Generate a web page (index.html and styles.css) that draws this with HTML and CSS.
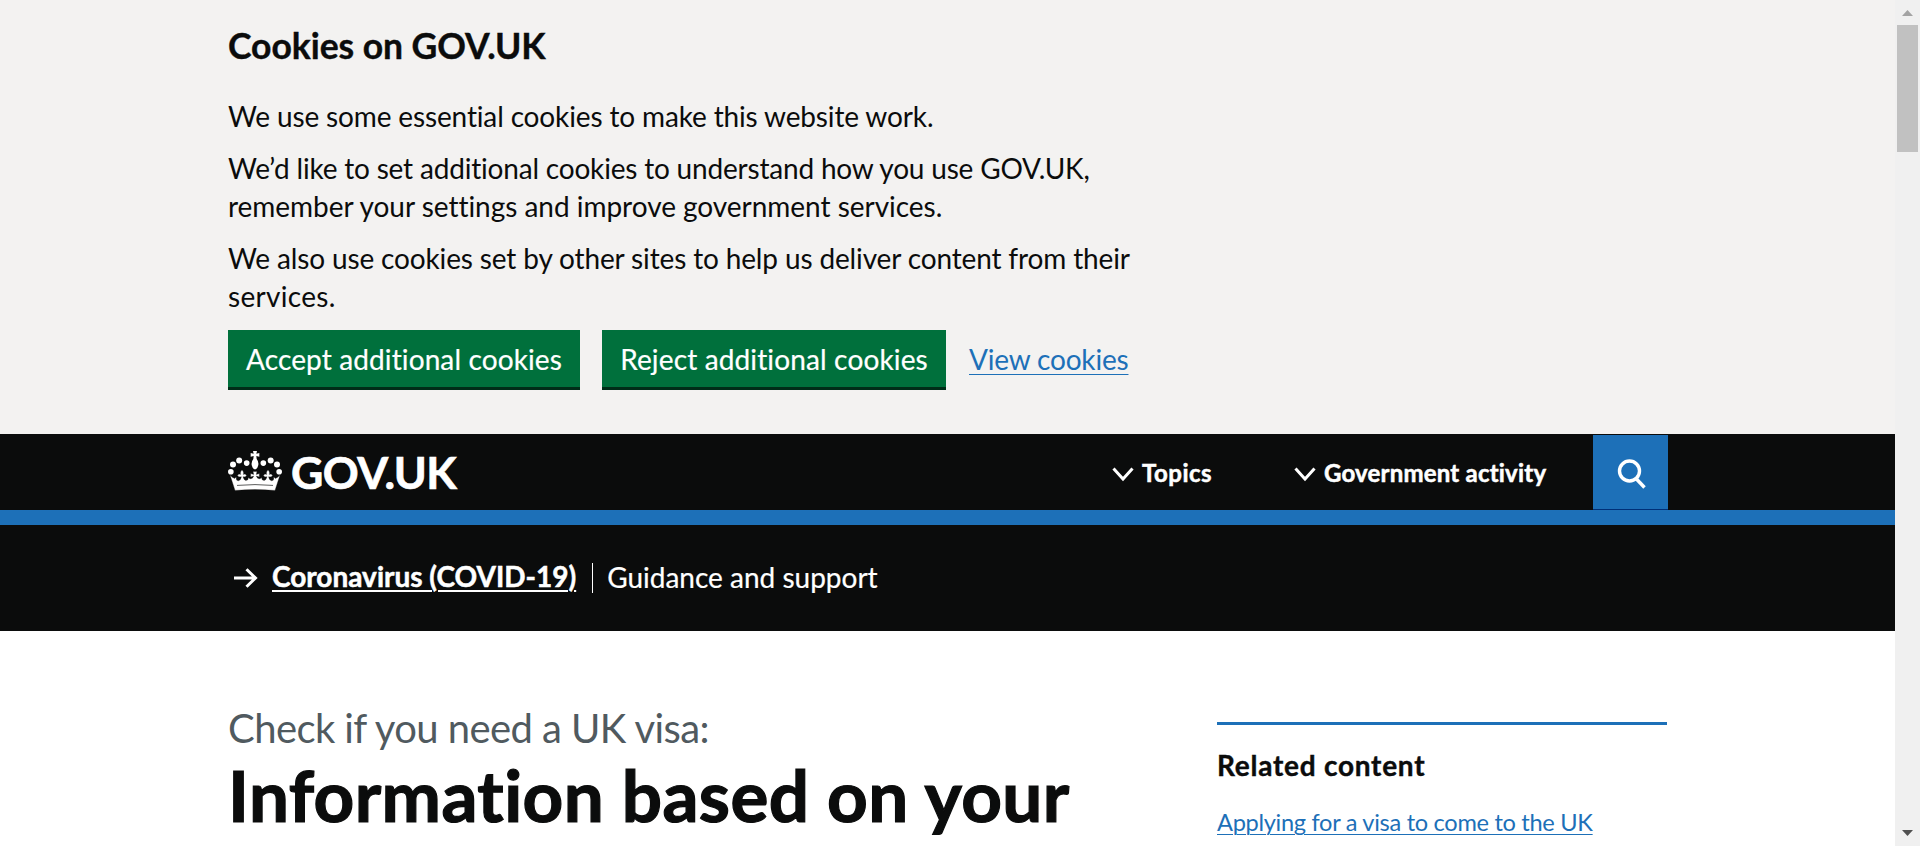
FILE: index.html
```
<!DOCTYPE html>
<html lang="en">
<head>
<meta charset="utf-8">
<title>Check if you need a UK visa - GOV.UK</title>
<link rel="stylesheet" href="styles.css">
</head>
<body>
<div class="page">
  <section class="cookie-banner">
    <h2 class="cookie-title">Cookies on GOV.UK</h2>
    <p class="cookie-text">We use some essential cookies to make this website work.</p>
    <p class="cookie-text"><span class="tight">We’d like to set additional cookies to understand how you use GOV.UK,</span><br><span class="loose">remember your settings and improve government services.</span></p>
    <p class="cookie-text">We also use cookies set by other sites to help us deliver content from their<br><span class="last">services.</span></p>
    <div class="cookie-actions">
      <button class="button accept">Accept additional cookies</button>
      <button class="button reject">Reject additional cookies</button>
      <a class="link view" href="#">View cookies</a>
    </div>
  </section>

  <header class="header">
    <div class="header-inner">
      <a class="logo" href="#">
        <svg class="crown" viewBox="39 65 162 118" aria-hidden="true">
          <circle cx="47.500" cy="127" r="8.500"/><circle cx="54" cy="105" r="9"/><circle cx="72.500" cy="93.500" r="9"/><circle cx="95" cy="101" r="8.500"/>
          <circle cx="145" cy="101" r="8.500"/><circle cx="167" cy="93.500" r="9"/><circle cx="186" cy="105" r="9"/><circle cx="192.500" cy="127" r="8.500"/>
          <path d="M114 65h12l-2 8 9-2v11l-9-2 1 9q8 10 4 21-3 10-9 10t-9-10q-4-11 4-21l1-9-9 2V71l9 2z"/>
          <path class="band" d="M45 137q6 8 14 10l5-5q-2 12 6 12 8-2 9-12-7 2-12-4 5-6 10-3-3-7 4-14 7 7 4 14 5-3 10 3-5 6-11 4 3 11 9 11 8 0 7-9l5 4q8 2 11-8l-9 3v-11l9 3-2-9h12l-2 9 9-3v11l-9-3q3 10 11 8l5-4q-1 9 7 9 6 0 9-11-6 2-11-4 5-6 10-3-3-7 4-14 7 7 4 14 5-3 10 3-5 6-12 4 1 10 9 12 8 0 6-12l5 5q8-2 14-10l-15 46q-60-5-120 0z"/>
          <path class="hem" d="M66 168q54-5 108 0"/>
        </svg>
        <span class="logo-text">GOV.UK</span>
      </a>
      <nav class="nav">
        <a class="nav-item topics" href="#"><svg class="chevron" viewBox="0 0 22 15"><path d="M1.500 1.500 11 12 20.500 1.500"/></svg><span>Topics</span></a>
        <a class="nav-item activity" href="#"><svg class="chevron" viewBox="0 0 22 15"><path d="M1.500 1.500 11 12 20.500 1.500"/></svg><span>Government activity</span></a>
        <button class="search" aria-label="Search"><svg class="search-icon" viewBox="0 0 30 30"><circle cx="12.500" cy="12" r="10"/><path d="M19 19.500 27.500 28.500"/></svg></button>
      </nav>
    </div>
  </header>

  <div class="covid">
    <svg class="arrow" viewBox="0 0 24 20"><path d="M0 10H21M12.500 1.200 21.500 10 12.500 18.800"/></svg>
    <a class="covid-link" href="#">Coronavirus (COVID-19)</a>
    <span class="covid-text">Guidance and support</span>
  </div>

  <main class="main">
    <h1 class="heading"><span class="caption">Check if you need a UK visa:</span><span class="title">Information based on your</span></h1>
    <aside class="related">
      <h2 class="related-title">Related content</h2>
      <a class="link related-link" href="#">Applying for a visa to come to the UK</a>
    </aside>
  </main>
</div>
<div class="scrollbar">
  <svg class="scroll-arrow" viewBox="0 0 11 6"><path fill="#a3a3a3" d="M0 6 5.500 0 11 6z"/></svg>
  <div class="thumb"></div>
  <svg class="scroll-arrow down" viewBox="0 0 11 6"><path fill="#505050" d="M0 0H11L5.500 6z"/></svg>
</div>
</body>
</html>
```
FILE: styles.css
```
* { box-sizing: border-box; }
html { height: 100%; overflow: hidden; }
body {
  margin: 0;
  height: 846px;
  overflow: hidden;
  display: grid;
  grid-template-columns: 1895px 25px;
  font-family: Lato, "Open Sans", sans-serif;
  font-size: 28px;
  font-variant-ligatures: none;
  color: #0b0c0c;
  background: #fff;
}
h1, h2, p { margin: 0; }
button { border: 0; font: inherit; color: #fff; padding: 0; }
.page { height: 846px; overflow: hidden; white-space: nowrap; }

.cookie-banner { height: 434px; padding: 23px 0 0 228px; background: #f3f2f1; }
.cookie-title { font-size: 35.5px; line-height: 45px; letter-spacing: -0.05px; margin-bottom: 29px; -webkit-text-stroke: 0.4px; }
.cookie-text { line-height: 38px; letter-spacing: -0.14px; margin-bottom: 14px; }
.tight { letter-spacing: -0.19px; }
.loose { letter-spacing: -0.03px; }
.last { letter-spacing: 0.3px; }
.cookie-actions { display: flex; padding-top: 1px; }
.button { height: 60px; line-height: 58px; background: #00703c; border-bottom: 3px solid #002d18; -webkit-text-stroke: 0.2px; }
.accept { width: 352px; letter-spacing: 0.12px; }
.reject { width: 344px; margin-left: 22px; letter-spacing: 0.14px; }
.link { color: #1d70b8; text-decoration: underline; text-decoration-thickness: 1px; text-underline-offset: 4px; }
.view { margin-left: 23px; line-height: 58px; letter-spacing: -0.18px; }

.header { height: 91px; background: #0b0c0c; border-bottom: 15px solid #1d70b8; }
.header-inner { width: 1440px; height: 76px; margin-left: 228px; display: flex; justify-content: space-between; }
.logo { display: flex; color: #fff; text-decoration: none; font-weight: 700; }
.crown { width: 54px; height: 39.5px; margin: 17px 9px 0 0; fill: #fff; }
.band { stroke: #0b0c0c; stroke-width: 1; }
.hem { fill: none; stroke: #0b0c0c; stroke-width: 2; }
.logo-text { font-size: 44.5px; line-height: 75px; letter-spacing: -0.5px; -webkit-text-stroke: 0.7px; }
.nav { display: flex; }
.nav-item { display: flex; color: #fff; text-decoration: none; font-size: 24px; font-weight: 700; line-height: 77px; -webkit-text-stroke: 0.5px; }
.topics { width: 182px; letter-spacing: 0.5px; }
.activity { width: 298px; letter-spacing: 0.2px; }
.chevron { width: 22px; height: 15px; margin: 33px 8px 0 -1px; fill: none; stroke: #fff; stroke-width: 3; }
.search { width: 75px; height: 75px; margin-top: 1px; background: #1d70b8; border-bottom: 1px solid #003078; }
.search-icon { display: block; width: 30px; height: 30px; margin: 3px 0 0 24px; fill: none; stroke: #fff; stroke-width: 3.4; }

.covid { height: 106px; padding-left: 234px; display: flex; background: #0b0c0c; color: #fff; }
.arrow { width: 24px; height: 20px; margin: 43px 14px 0 0; fill: none; stroke: #fff; stroke-width: 3; }
.covid-link { line-height: 103px; color: #fff; font-weight: 700; text-decoration-thickness: 1.5px; text-underline-offset: 3px; -webkit-text-stroke: 0.5px; }
.covid-text { height: 30px; margin: 38px 0 0 16px; padding-left: 14px; border-left: 1.5px solid #fff; line-height: 28px; -webkit-text-stroke: 0.2px; }

.main { display: flex; padding-left: 228px; }
.heading { width: 989px; padding-top: 73px; }
.caption, .title { display: block; }
.caption { font-size: 40px; font-weight: 400; line-height: 48px; letter-spacing: -0.58px; color: #505a5f; }
.title { margin-top: 4px; font-size: 71px; line-height: 78px; letter-spacing: 0.38px; -webkit-text-stroke: 1.2px; }
.related { width: 450px; margin-top: 91px; padding-top: 21px; border-top: 3px solid #1d70b8; }
.related-title { font-size: 28px; line-height: 38px; letter-spacing: 0.75px; margin-bottom: 23px; -webkit-text-stroke: 0.4px; }
.related-link { display: block; font-size: 23.6px; line-height: 30px; letter-spacing: -0.3px; text-underline-offset: 3px; }

.scrollbar { display: flex; flex-direction: column; align-items: center; padding: 10px 0; background: #f0f0f0; }
.scroll-arrow { width: 11px; height: 6px; }
.thumb { width: 21px; height: 127px; margin: 9px 0 auto; background: #c1c1c1; }
```
